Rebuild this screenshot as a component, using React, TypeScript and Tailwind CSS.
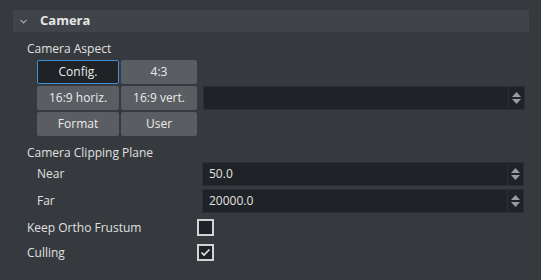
import React from "react";

const font = { fontFamily: '"Open Sans", "Noto Sans", sans-serif' };

function Spinner() {
  return (
    <div className="flex h-full w-[16px] flex-col items-center justify-center gap-[2px] border-l border-[#2c2f33]">
      <svg width="9" height="5" viewBox="0 0 9 5"><path d="M4.5 0 L9 5 L0 5 Z" fill="#9a9c9f" /></svg>
      <svg width="9" height="5" viewBox="0 0 9 5"><path d="M0 0 L9 0 L4.5 5 Z" fill="#9a9c9f" /></svg>
    </div>
  );
}

function NumInput({ value }: { value: string }) {
  return (
    <div className="flex h-[24px] w-[322px] items-center border border-[#2a2d31] bg-[#1f2226]">
      <div className="flex-1 pl-[6px] text-[12px] text-[#e2e2e2]">{value}</div>
      <Spinner />
    </div>
  );
}

function Btn({ label, active }: { label: string; active?: boolean }) {
  return (
    <div
      className={
        "flex h-[24px] items-center justify-center rounded-[2px] text-[12px] text-[#ebebeb] " +
        (active ? "border border-[#3d8fd8] bg-[#1f2226]" : "bg-[#5a5d61]")
      }
    >
      {label}
    </div>
  );
}

function Checkbox({ checked }: { checked?: boolean }) {
  return (
    <div className="flex h-[17px] w-[17px] items-center justify-center border-2 border-[#d2d3d4] bg-[#1f2226]">
      {checked && (
        <svg width="11" height="9" viewBox="0 0 11 9">
          <path d="M1.5 4.5 L4 7 L9.5 1.5" stroke="#e8e8e8" strokeWidth="1.6" fill="none" />
        </svg>
      )}
    </div>
  );
}

export default function App() {
  return (
    <div className="h-[280px] w-[541px] bg-[#36393e] pt-[10px] text-[#e0e0e0]" style={font}>
      <div className="ml-[13px] flex h-[22px] w-[516px] items-center bg-[#404348]">
        <svg className="ml-[7px]" width="7" height="5" viewBox="0 0 7 5">
          <path d="M0.5 0.8 L3.5 3.8 L6.5 0.8" stroke="#a6a8aa" strokeWidth="1.2" fill="none" />
        </svg>
        <span className="ml-[13px] text-[13px] font-bold text-[#e6e6e6]">Camera</span>
      </div>

      <div className="mt-[8px] flex h-[18px] items-center pl-[27px] text-[12px]">Camera Aspect</div>

      <div className="mt-[2px] flex pl-[37px]">
        <div className="grid grid-cols-[82px_76px] gap-[2px]">
          <Btn label="Config." active />
          <Btn label="4:3" />
          <Btn label="16:9 horiz." />
          <Btn label="16:9 vert." />
          <Btn label="Format" />
          <Btn label="User" />
        </div>
        <div className="ml-[6px] mt-[26px]">
          <NumInput value="" />
        </div>
      </div>

      <div className="mt-[8px] flex h-[18px] items-center pl-[27px] text-[12px]">Camera Clipping Plane</div>

      <div className="flex flex-col gap-[3px]">
        <div className="flex items-center">
          <div className="w-[202px] pl-[37px] text-[12px]">Near</div>
          <NumInput value="50.0" />
        </div>
        <div className="flex items-center">
          <div className="w-[202px] pl-[37px] text-[12px]">Far</div>
          <NumInput value="20000.0" />
        </div>
      </div>

      <div className="mt-[2px] flex h-[25px] items-center">
        <div className="w-[197px] pl-[27px] text-[12px]">Keep Ortho Frustum</div>
        <Checkbox />
      </div>
      <div className="flex h-[25px] items-center">
        <div className="w-[197px] pl-[27px] text-[12px]">Culling</div>
        <Checkbox checked />
      </div>
    </div>
  );
}
